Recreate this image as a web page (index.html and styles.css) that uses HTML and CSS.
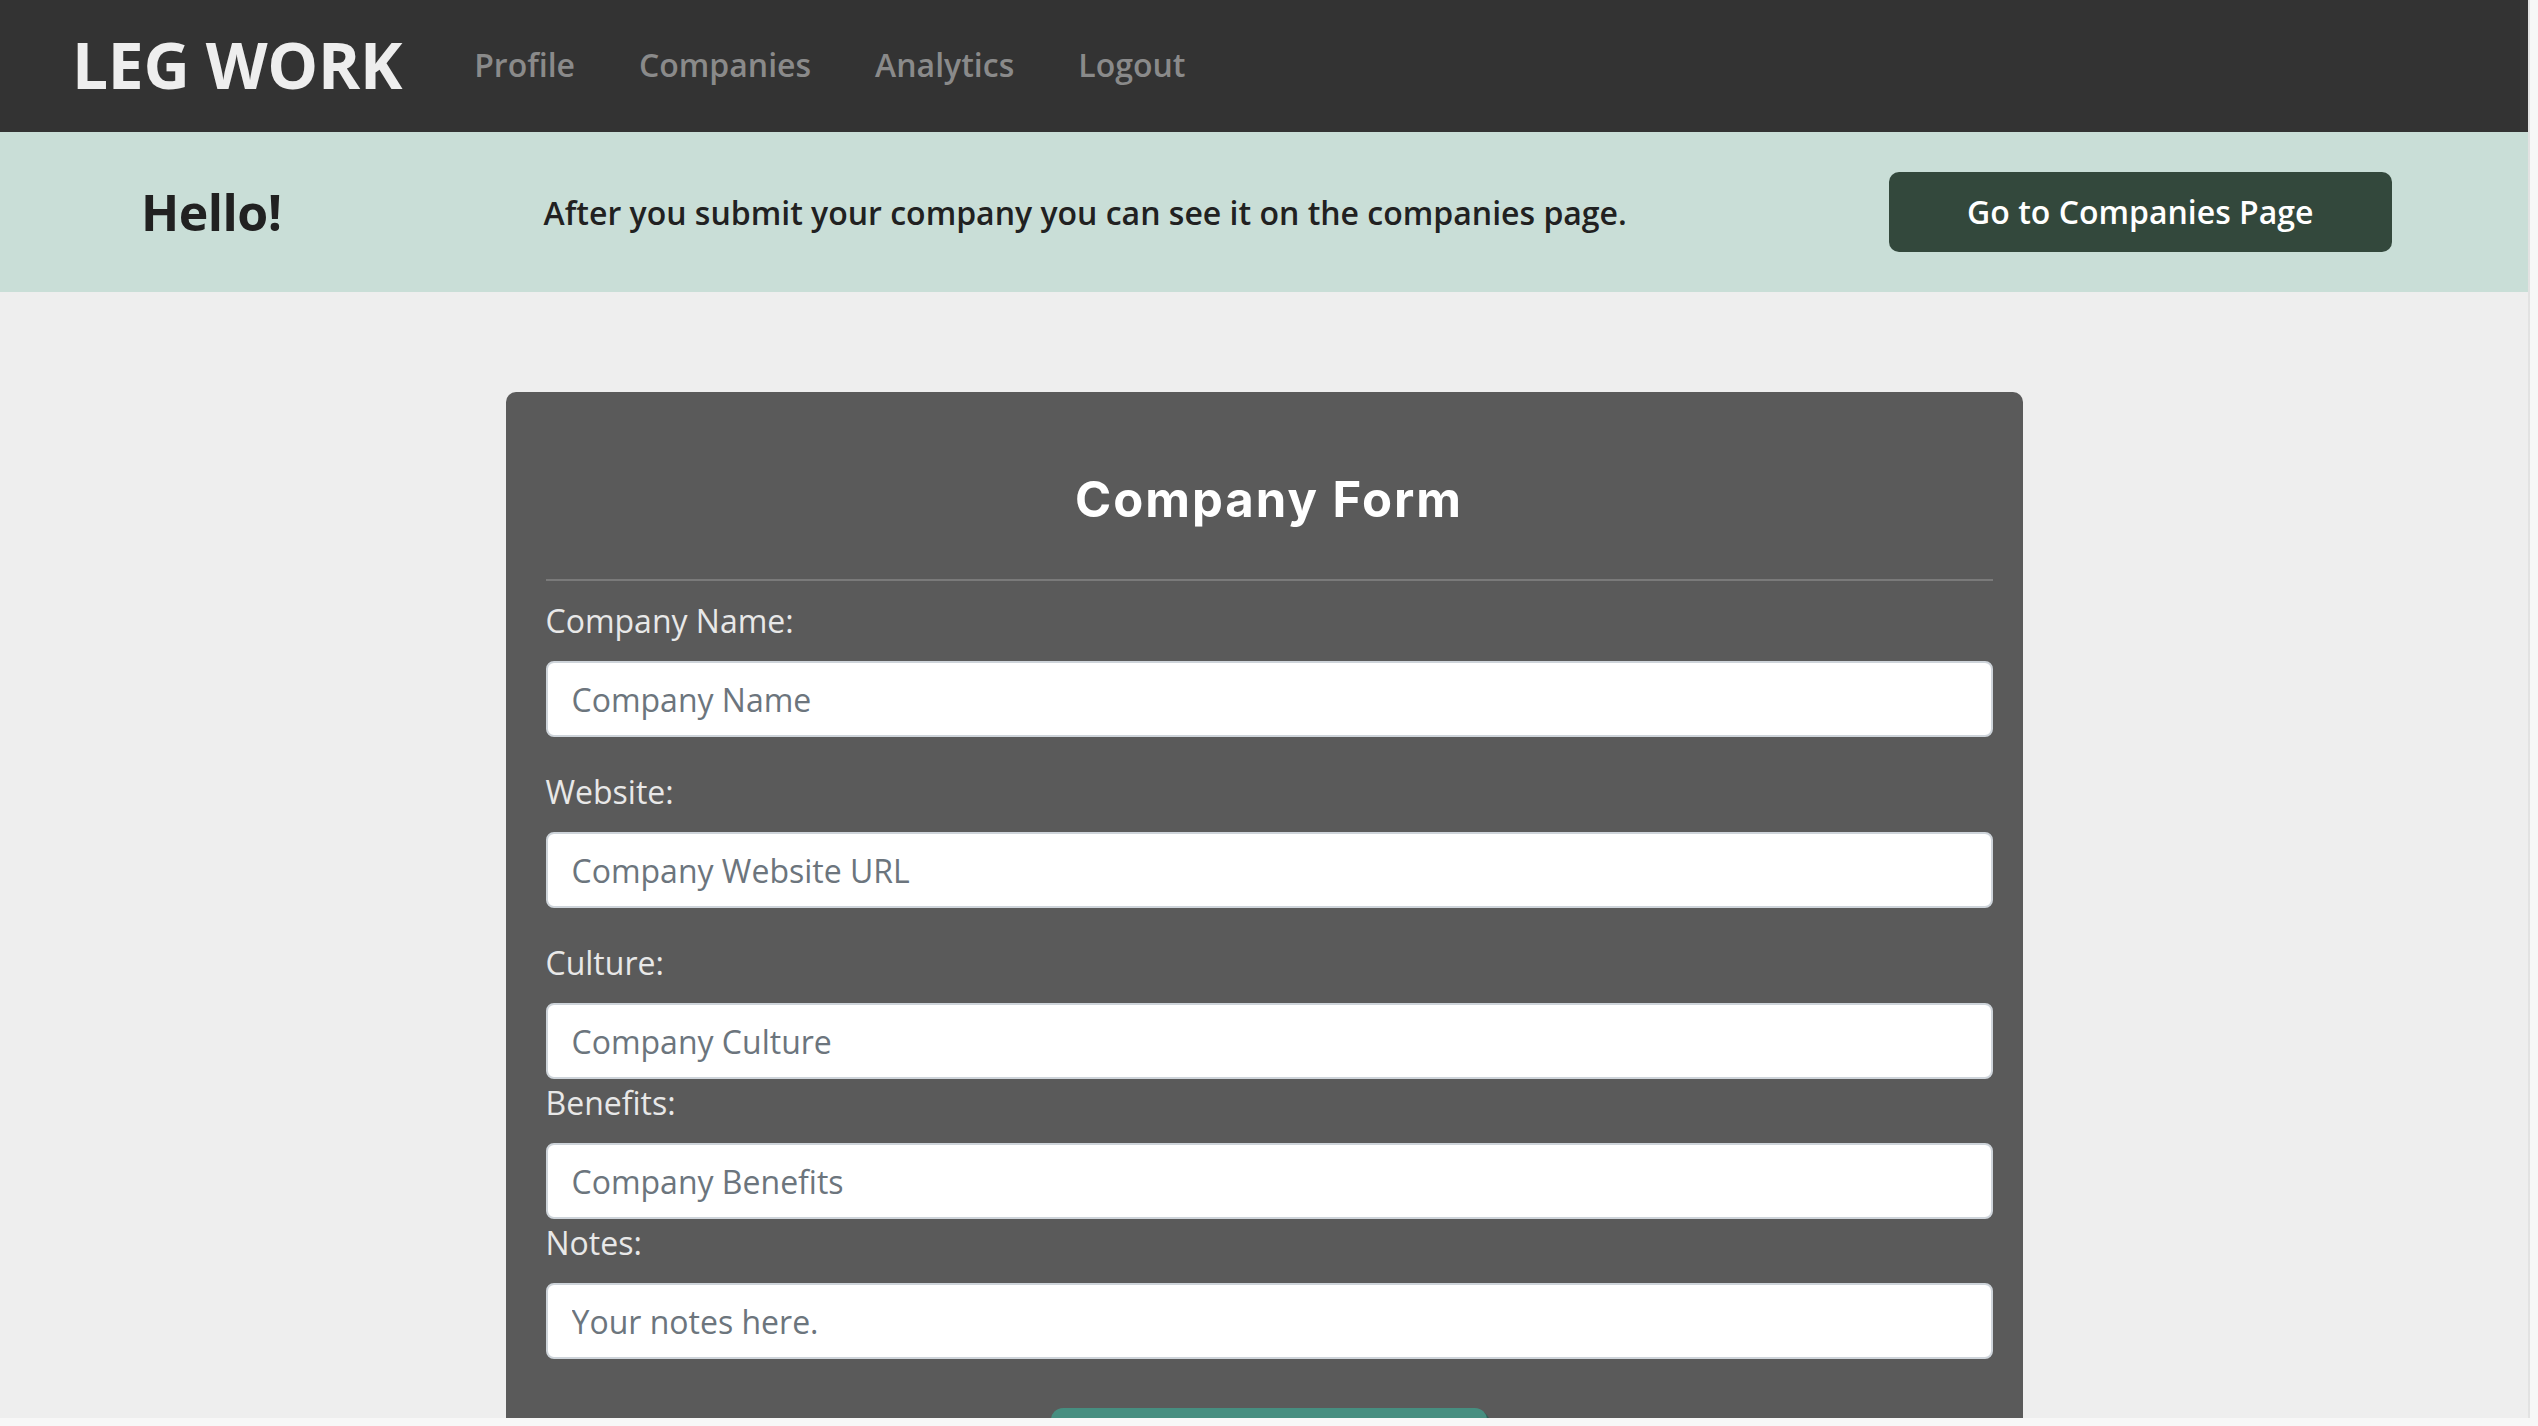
FILE: index.html
```html
<!DOCTYPE html>
<html lang="en">
<head>
<meta charset="utf-8">
<title>Leg Work - Company Form</title>
<link rel="stylesheet" href="styles.css">
</head>
<body>
<div class="page">
  <nav class="navbar">
    <a class="brand" href="#">LEG WORK</a>
    <ul class="nav-links">
      <li><a href="#">Profile</a></li>
      <li><a href="#">Companies</a></li>
      <li><a href="#">Analytics</a></li>
      <li><a href="#">Logout</a></li>
    </ul>
  </nav>
  <header class="banner">
    <h1 class="hello">Hello!</h1>
    <p class="banner-text">After you submit your company you can see it on the companies page.</p>
    <a class="btn-dark" href="#">Go to Companies Page</a>
  </header>
  <main class="main">
    <form class="card">
      <h2 class="card-title">Company Form</h2>
      <hr class="divider">
      <div class="group spaced">
        <label class="label" for="name">Company Name:</label>
        <input class="input" id="name" type="text" placeholder="Company Name">
      </div>
      <div class="group spaced">
        <label class="label" for="site">Website:</label>
        <input class="input" id="site" type="text" placeholder="Company Website URL">
      </div>
      <div class="group">
        <label class="label" for="culture">Culture:</label>
        <input class="input" id="culture" type="text" placeholder="Company Culture">
      </div>
      <div class="group">
        <label class="label" for="benefits">Benefits:</label>
        <input class="input" id="benefits" type="text" placeholder="Company Benefits">
      </div>
      <div class="group">
        <label class="label" for="notes">Notes:</label>
        <input class="input" id="notes" type="text" placeholder="Your notes here.">
      </div>
      <div class="actions">
        <button class="btn-submit" type="submit">Submit</button>
      </div>
    </form>
  </main>
</div>
</body>
</html>
```

FILE: styles.css
```css
* { box-sizing: border-box; }

html, body {
  margin: 0;
  padding: 0;
  background: #f7f7f7;
  overflow: hidden;
}

body {
  font-family: "Open Sans", "Noto Sans", "Liberation Sans", sans-serif;
}

.page {
  width: 2530px;
  height: 1418px;
  overflow: hidden;
  background: #eeeeee;
  border-right: 2px solid #e2e2e2;
  display: flex;
  flex-direction: column;
}

.navbar {
  height: 132px;
  flex: none;
  background: #333333;
  display: flex;
  align-items: center;
  padding-left: 72px;
}

.brand {
  color: #eeeeee;
  font-weight: 700;
  font-size: 64px;
  line-height: 1;
  text-decoration: none;
  margin-right: 40px;
  letter-spacing: -0.3px;
  padding-bottom: 2px;
}

.nav-links {
  list-style: none;
  margin: 0;
  padding: 0 0 4px;
  display: flex;
}

.nav-links a {
  display: block;
  padding: 0 32px;
  color: #8a8a8a;
  font-size: 32px;
  font-weight: 600;
  text-decoration: none;
}

.banner {
  height: 160px;
  flex: none;
  background: #c9ded7;
  display: flex;
  align-items: center;
  padding-left: 141px;
  gap: 262px;
}

.hello {
  margin: 0;
  font-size: 50px;
  font-weight: 700;
  color: #212121;
  letter-spacing: -0.5px;
}

.banner-text {
  margin: 0;
  font-size: 32px;
  font-weight: 600;
  color: #212121;
}

.btn-dark {
  display: block;
  background: #33483c;
  color: #ffffff;
  font-size: 32px;
  font-weight: 600;
  line-height: 48px;
  padding: 16px 0;
  width: 503px;
  text-align: center;
  border-radius: 10px;
  text-decoration: none;
}

.main {
  flex: 1;
  display: flex;
  justify-content: center;
  padding-top: 100px;
}

.card {
  width: 1517px;
  background: #5a5a5a;
  border-radius: 10px;
  padding: 78px 30px 0 40px;
  display: flex;
  flex-direction: column;
  align-self: flex-start;
  min-height: 1100px;
}

.card-title {
  margin: 0;
  text-align: center;
  font-family: "Inter", "Noto Sans", sans-serif;
  font-size: 49px;
  line-height: 60px;
  font-weight: 700;
  color: #ffffff;
  letter-spacing: 2px;
}

.divider {
  margin: 49px 0 16px;
  border: 0;
  border-top: 2px solid #7a7a7a;
  height: 0;
}

.group {
  display: flex;
  flex-direction: column;
}

.group.spaced {
  margin-bottom: 31px;
}

.label {
  font-size: 32px;
  line-height: 48px;
  color: #e8e8e8;
  margin-bottom: 16px;
}

.input {
  height: 76px;
  width: 100%;
  border: 2px solid #ced4da;
  border-radius: 8px;
  background: #ffffff;
  padding: 12px 24px;
  font-family: "Open Sans", "Noto Sans", sans-serif;
  font-size: 32px;
  line-height: 48px;
  color: #495057;
}

.input::placeholder {
  color: #6c757d;
  opacity: 1;
}

.actions {
  display: flex;
  justify-content: center;
  padding-top: 49px;
}

.btn-submit {
  width: 436px;
  height: 80px;
  border: 0;
  border-radius: 12px;
  background: #468e80;
  box-shadow: 3px 3px 0 #2f5f56;
  color: #ffffff;
  font-family: "Open Sans", sans-serif;
  font-size: 32px;
  font-weight: 600;
}
```
